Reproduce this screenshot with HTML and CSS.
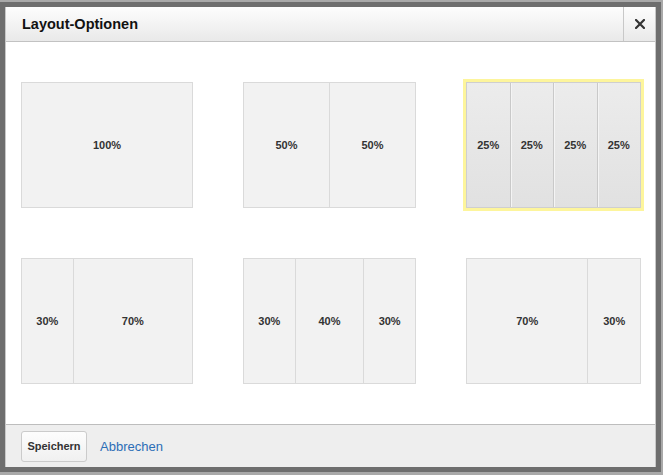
FILE: index.html
```html
<!DOCTYPE html>
<html>

<head>
    <title>Layout-Optionen</title>
    <link rel="stylesheet" href="styles.css">
</head>

<body>
    <div class="dialog">
        <div class="dialog-inner">
            <div class="dialog-header">
                <h1>Layout-Optionen</h1>
                <button class="close-button" type="button" title="Schließen">
                    <svg width="10" height="10" viewBox="0 0 10 10">
                        <path d="M1 1 L9 9 M9 1 L1 9" stroke="#333" stroke-width="2.2" stroke-linecap="square" />
                    </svg>
                </button>
            </div>

            <div class="dialog-body">
                <div class="layout-grid">
                    <div class="layout-card">
                        <div class="col" style="flex-basis: 100%">100%</div>
                    </div>
                    <div class="layout-card">
                        <div class="col" style="flex-basis: 50%">50%</div>
                        <div class="col" style="flex-basis: 50%">50%</div>
                    </div>
                    <div class="layout-card selected">
                        <div class="col" style="flex-basis: 25%">25%</div>
                        <div class="col" style="flex-basis: 25%">25%</div>
                        <div class="col" style="flex-basis: 25%">25%</div>
                        <div class="col" style="flex-basis: 25%">25%</div>
                    </div>

                    <div class="layout-card">
                        <div class="col" style="flex-basis: 30%">30%</div>
                        <div class="col" style="flex-basis: 70%">70%</div>
                    </div>
                    <div class="layout-card">
                        <div class="col" style="flex-basis: 30%">30%</div>
                        <div class="col" style="flex-basis: 40%">40%</div>
                        <div class="col" style="flex-basis: 30%">30%</div>
                    </div>
                    <div class="layout-card">
                        <div class="col" style="flex-basis: 70%">70%</div>
                        <div class="col" style="flex-basis: 30%">30%</div>
                    </div>
                </div>
            </div>

            <div class="dialog-footer">
                <button class="save-button" type="button">Speichern</button>
                <a href="#" class="cancel-link">Abbrechen</a>
            </div>
        </div>
    </div>
</body>

</html>
```

FILE: styles.css
```css
body {
    margin: 0;
    background-color: #a9a9a9;
    font-family: "Liberation Sans", Arial, sans-serif;
    color: #333;
}

.dialog {
    width: 651px;
    margin-top: 2px;
    border: 5px solid #6e6e6e;
    background-color: #6e6e6e;
}

.dialog-inner {
    border-left: 1px solid #c8c8c8;
    border-right: 1px solid #c8c8c8;
    background-color: #fff;
}

.dialog-header {
    display: flex;
    align-items: stretch;
    height: 34px;
    background: linear-gradient(#fdfdfd, #e9e9e9);
    border-bottom: 1px solid #c2c2c2;
}

.dialog-header h1 {
    flex: 1;
    margin: 0;
    padding: 9px 0 0 16px;
    font-size: 14.5px;
    font-weight: bold;
    color: #111;
}

.close-button {
    width: 32px;
    padding: 0;
    border: none;
    border-left: 1px solid #c8c8c8;
    background: transparent;
    display: flex;
    align-items: center;
    justify-content: center;
    cursor: pointer;
}

.dialog-body {
    height: 301px;
    padding: 40px 0 41px 15px;
}

.layout-grid {
    display: grid;
    grid-template-columns: 172px 173px 175px;
    grid-auto-rows: 126px;
    column-gap: 50px;
    row-gap: 50px;
}

.layout-card {
    display: flex;
    border: 1px solid #dadada;
    background-color: #f2f2f2;
}

.layout-card .col {
    display: flex;
    align-items: center;
    justify-content: center;
    font-size: 11px;
    font-weight: bold;
    color: #333;
}

.layout-card .col + .col {
    border-left: 1px solid #dadada;
}

.layout-card.selected {
    border-color: #cfcfcf;
    background: linear-gradient(#ececec, #e1e1e1);
    box-shadow: 0 0 0 3px #fdf59c;
}

.layout-card.selected .col + .col {
    border-left: 1px solid #c9c9c9;
    box-shadow: inset 1px 0 0 #f4f4f4;
}

.dialog-footer {
    display: flex;
    align-items: center;
    height: 42px;
    padding-left: 15px;
    border-top: 1px solid #bdbdbd;
    background-color: #eeeeee;
}

.save-button {
    width: 66px;
    height: 31px;
    padding: 0;
    margin-right: 13px;
    border: 1px solid #cbcbcb;
    border-radius: 3px;
    background: linear-gradient(#fdfdfd, #f0f0f0);
    font-family: "Liberation Sans", Arial, sans-serif;
    font-size: 11px;
    font-weight: bold;
    color: #333;
    cursor: pointer;
}

.cancel-link {
    font-size: 13px;
    color: #2c6db6;
    text-decoration: none;
}
```
